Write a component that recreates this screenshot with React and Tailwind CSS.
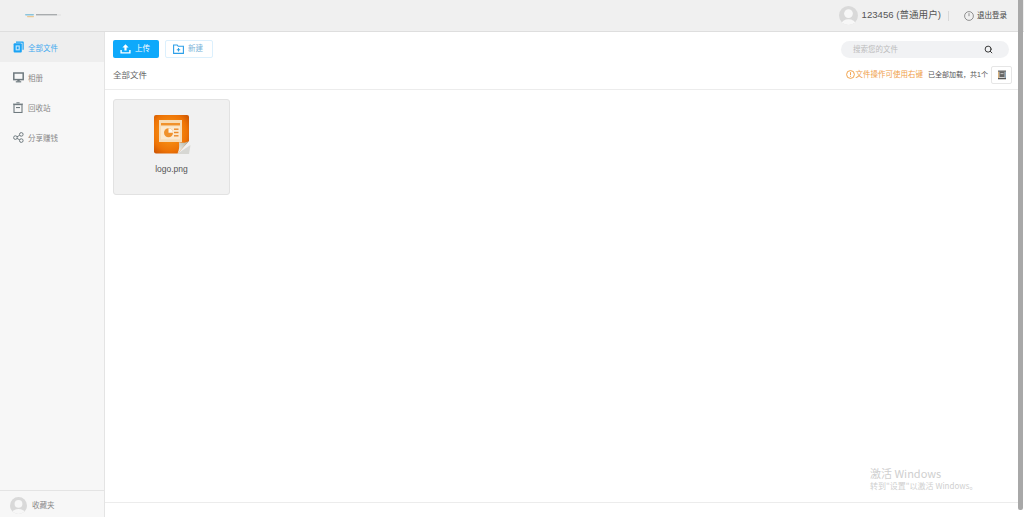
import React from 'react';
import { Search } from 'lucide-react';

const Avatar = ({ size }) => (
  <svg width={size} height={size} viewBox="0 0 20 20" className="shrink-0">
    <defs>
      <clipPath id={`av${size}`}><circle cx="10" cy="10" r="10" /></clipPath>
    </defs>
    <g clipPath={`url(#av${size})`}>
      <rect width="20" height="20" fill="#d9d9d9" />
      <circle cx="10" cy="8" r="4.6" fill="#f7f7f7" />
      <ellipse cx="10" cy="19" rx="7.5" ry="5" fill="#f7f7f7" />
    </g>
  </svg>
);

const Logo = () => (
  <svg width="36" height="6" viewBox="0 0 36 6">
    <rect x="0" y="1" width="9" height="1.6" rx="0.8" fill="#8cc4dc" />
    <rect x="2" y="3" width="7" height="1.2" rx="0.6" fill="#ecc893" />
    <rect x="11" y="1" width="21" height="1.4" fill="#a9acae" />
    <rect x="32" y="1.6" width="4" height="0.8" fill="#dcdcdc" />
  </svg>
);

const FilesIcon = () => (
  <svg width="11" height="12" viewBox="0 0 11 12">
    <path d="M3 0.5h7a.7.7 0 0 1 .7.7v7.6h-1.2V1.7H3z" fill="#1aa3f5" />
    <rect x="0.6" y="2.3" width="8.2" height="9.2" rx="1" fill="#1aa3f5" />
    <rect x="2.6" y="4.4" width="4.2" height="5" fill="#bfe4fb" />
    <rect x="3.8" y="5.6" width="1.8" height="2.6" fill="#1aa3f5" />
  </svg>
);

const ScreenIcon = () => (
  <svg width="11" height="11" viewBox="0 0 11 11" fill="none">
    <rect x="0.8" y="1" width="9.4" height="6.6" stroke="#6f7a7f" strokeWidth="1.5" />
    <rect x="4.3" y="7.8" width="2.4" height="1.6" fill="#6f7a7f" />
    <rect x="2.8" y="9.2" width="5.4" height="1.2" fill="#6f7a7f" />
  </svg>
);

const BinIcon = () => (
  <svg width="10" height="11" viewBox="0 0 10 11" fill="none">
    <rect x="3.4" y="0.3" width="3.2" height="1" fill="#6f7a7f" />
    <rect x="0" y="1.6" width="10" height="1" fill="#6f7a7f" />
    <rect x="1" y="2.6" width="8" height="7.9" stroke="#6f7a7f" strokeWidth="1.1" />
    <rect x="3" y="5" width="4" height="1.1" fill="#6f7a7f" />
  </svg>
);

const ShareIcon = () => (
  <svg width="11" height="11" viewBox="0 0 11 11" fill="none" stroke="#6f7a7f" strokeWidth="1">
    <circle cx="2.4" cy="5.6" r="1.8" />
    <circle cx="8.3" cy="2.4" r="1.8" />
    <circle cx="8.3" cy="8.6" r="1.8" />
    <path d="M4 4.8l2.7-1.5M4 6.4l2.7 1.4" />
  </svg>
);

const UploadIcon = () => (
  <svg width="11" height="10" viewBox="0 0 11 10" fill="#fff">
    <path d="M5.5 0.2L8.6 3.5H6.6V6.6H4.4V3.5H2.4z" />
    <path d="M0.4 6h1.4v2.2h7.4V6h1.4v3.6H0.4z" />
  </svg>
);

const NewFolderIcon = () => (
  <svg width="11" height="10" viewBox="0 0 11 10" fill="none" stroke="#2c9fe8" strokeWidth="1.1">
    <path d="M0.6 1h3.6l1 1.3h5.2v7.1H0.6z" />
    <path d="M5.5 4v3.4M3.8 5.7h3.4" />
  </svg>
);

const PowerIcon = () => (
  <svg width="10" height="10" viewBox="0 0 10 10" fill="none" stroke="#777" strokeWidth="0.8">
    <circle cx="5" cy="5" r="4.4" />
    <path d="M5 2.2v3" />
  </svg>
);

const TipIcon = () => (
  <svg width="9" height="9" viewBox="0 0 9 9" fill="none" stroke="#ef9a3a" strokeWidth="0.9">
    <circle cx="4.5" cy="4.5" r="3.9" />
    <path d="M4.5 2.2v2.8M4.5 5.8v1" />
  </svg>
);

const ViewIcon = () => (
  <svg width="8" height="10" viewBox="0 0 9 10">
    <rect x="0" y="0" width="9" height="1.4" fill="#555" />
    <rect x="0" y="1.4" width="1.6" height="7.2" fill="#d9b27c" />
    <rect x="7.4" y="1.4" width="1.6" height="7.2" fill="#8fa6b8" />
    <rect x="1.6" y="1.4" width="5.8" height="6.2" fill="#666" />
    <rect x="2.8" y="3" width="3.4" height="1" fill="#d8d8d8" />
    <rect x="0" y="8.4" width="9" height="1.4" fill="#555" />
  </svg>
);

// ppt style file thumbnail
const FileIcon = () => (
  <svg width="38" height="41" viewBox="0 0 38 41">
    <defs>
      <radialGradient id="ppt" cx="0.45" cy="0.45" r="0.75">
        <stop offset="0" stopColor="#fba11c" />
        <stop offset="0.65" stopColor="#ee7406" />
        <stop offset="1" stopColor="#c04a02" />
      </radialGradient>
      <linearGradient id="curl" x1="0" y1="1" x2="1" y2="0">
        <stop offset="0" stopColor="#fafaf6" />
        <stop offset="1" stopColor="#a9ad9f" />
      </linearGradient>
    </defs>
    <path d="M24 40h12l1.5-9z" fill="#b8b8b0" opacity="0.45" />
    <path d="M3 1h31a2 2 0 0 1 2 2v24L24.5 39.5H3a2 2 0 0 1-2-2V3a2 2 0 0 1 2-2z" fill="url(#ppt)" />
    <path d="M24.5 39.5c1.8-3.5 2-7.5 1.4-11.2 4 .9 7.2.6 10.1-1.3z" fill="url(#curl)" />
    <rect x="6" y="6" width="23" height="22" fill="#f7dcb6" />
    <rect x="8" y="9" width="19" height="2.4" fill="#f0922c" />
    <rect x="8" y="12.4" width="19" height="13" fill="#fbe9cf" />
    <circle cx="15.5" cy="18.8" r="4.5" fill="#f0922c" />
    <path d="M15.5 18.8v-4.5a4.5 4.5 0 0 1 4.5 4.5z" fill="#fdf6ea" />
    <rect x="21" y="14.5" width="4.5" height="1.4" fill="#ea8a2a" />
    <rect x="21" y="17.8" width="4.5" height="1.4" fill="#ea8a2a" />
    <rect x="21" y="21.1" width="4.5" height="1.4" fill="#ea8a2a" />
  </svg>
);

const navItems = [
  { label: '全部文件', icon: FilesIcon, active: true },
  { label: '相册', icon: ScreenIcon },
  { label: '回收站', icon: BinIcon },
  { label: '分享赚钱', icon: ShareIcon },
];

export default function App() {
  return (
    <div className="relative flex h-[517px] w-[1024px] flex-col overflow-hidden bg-white font-['Liberation_Sans','Noto_Sans_CJK_SC',sans-serif]">
      {/* Header */}
      <header className="flex h-8 shrink-0 items-center justify-between border-b border-[#dedede] bg-[#f0f0f0] pl-[25px] pr-[17px]">
        <Logo />
        <div className="flex items-center">
          <Avatar size={19} />
          <span className="ml-[4px] text-[9.6px] text-[#555]">123456 (普通用户)</span>
          <span className="ml-[7px] h-[10px] w-px bg-[#d8d8d8]" />
          <span className="ml-[15px]"><PowerIcon /></span>
          <span className="ml-[3px] text-[7.5px] text-[#444]">退出登录</span>
        </div>
      </header>

      <div className="flex min-h-0 flex-1">
        {/* Sidebar */}
        <aside className="flex w-[105px] shrink-0 flex-col border-r border-[#e4e4e4] bg-[#f7f7f7]">
          <nav className="flex-1">
            {navItems.map(({ label, icon: Icon, active }) => (
              <div
                key={label}
                className={`flex h-[30px] items-center pl-[13px] text-[7.5px] ${active ? 'bg-[#eeeeee] text-[#3fa9ee]' : 'text-[#888]'}`}
              >
                <span className="flex w-[15px] items-center"><Icon /></span>
                <span className="pt-[4px]">{label}</span>
              </div>
            ))}
          </nav>
          <div className="flex h-[27px] items-center gap-[5px] border-t border-[#e4e4e4] pl-[10px] pt-[2px] text-[7.5px] text-[#888]">
            <Avatar size={17} />
            <span className="pt-[2px]">收藏夹</span>
          </div>
        </aside>

        {/* Main */}
        <main className="flex min-w-0 flex-1 flex-col pr-[6px]">
          <div className="flex h-[34px] items-center justify-between pl-[8px] pr-[9px]">
            <div className="flex items-center gap-[6px]">
              <button className="flex h-[18px] w-[46px] items-center gap-[4px] rounded-[2px] bg-[#0ea9fb] pl-[7px] text-[7.5px] text-white">
                <UploadIcon />
                <span>上传</span>
              </button>
              <button className="flex h-[18px] w-[48px] items-center gap-[4px] rounded-[2px] border border-[#dcf0fd] bg-white pl-[7px] text-[7.5px] text-[#7cb4d8]">
                <NewFolderIcon />
                <span>新建</span>
              </button>
            </div>
            <div className="flex h-[17px] w-[168px] items-center justify-between rounded-full bg-[#f1f2f4] pl-[12px] pr-[16px] text-[7.5px] text-[#bcbcbc]">
              <span className="pt-[1px]">搜索您的文件</span>
              <Search size={9} strokeWidth={2.6} className="text-[#333]" />
            </div>
          </div>

          <div className="flex h-[24px] items-center justify-between border-b border-[#ececec] pb-[6px] pl-[8px] pr-[6px]">
            <span className="pt-[2px] text-[8.5px] text-[#666]">全部文件</span>
            <div className="flex items-center text-[7.5px]">
              <TipIcon />
              <span className="ml-[1px] pt-[1px] text-[#efa04a]">文件操作可使用右键</span>
              <span className="ml-[5px] pt-[1px] text-[7px] text-[#555]">已全部加载，共1个</span>
              <span className="ml-[3px] flex h-[18px] w-[21px] items-center justify-center rounded-[2px] border border-[#e6e6e6] bg-white">
                <ViewIcon />
              </span>
            </div>
          </div>

          <div className="flex-1 pl-[8px] pt-[9px]">
            <div className="flex h-[96px] w-[117px] flex-col items-center rounded-[3px] border border-[#e2e2e2] bg-[#f1f1f1] pt-[14px]">
              <FileIcon />
              <span className="mt-[8px] text-[8.5px] text-[#555]">logo.png</span>
            </div>
          </div>

          <div className="h-[15px] shrink-0 border-t border-[#ececec]" />
        </main>
      </div>

      {/* Scrollbar */}
      <div className="absolute right-[1px] top-0 h-[510px] w-[5px] rounded-b-[2px] bg-[#a8a8a8]" />

      {/* Windows activation watermark */}
      <div className="pointer-events-none absolute left-[870px] top-[466px] font-['Noto_Sans_CJK_SC','Noto_Sans',sans-serif] text-[#cfcfcf]">
        <div className="text-[11px] leading-[14px]">激活 Windows</div>
        <div className="text-[8px] leading-[12px]">转到"设置"以激活 Windows。</div>
      </div>
    </div>
  );
}
